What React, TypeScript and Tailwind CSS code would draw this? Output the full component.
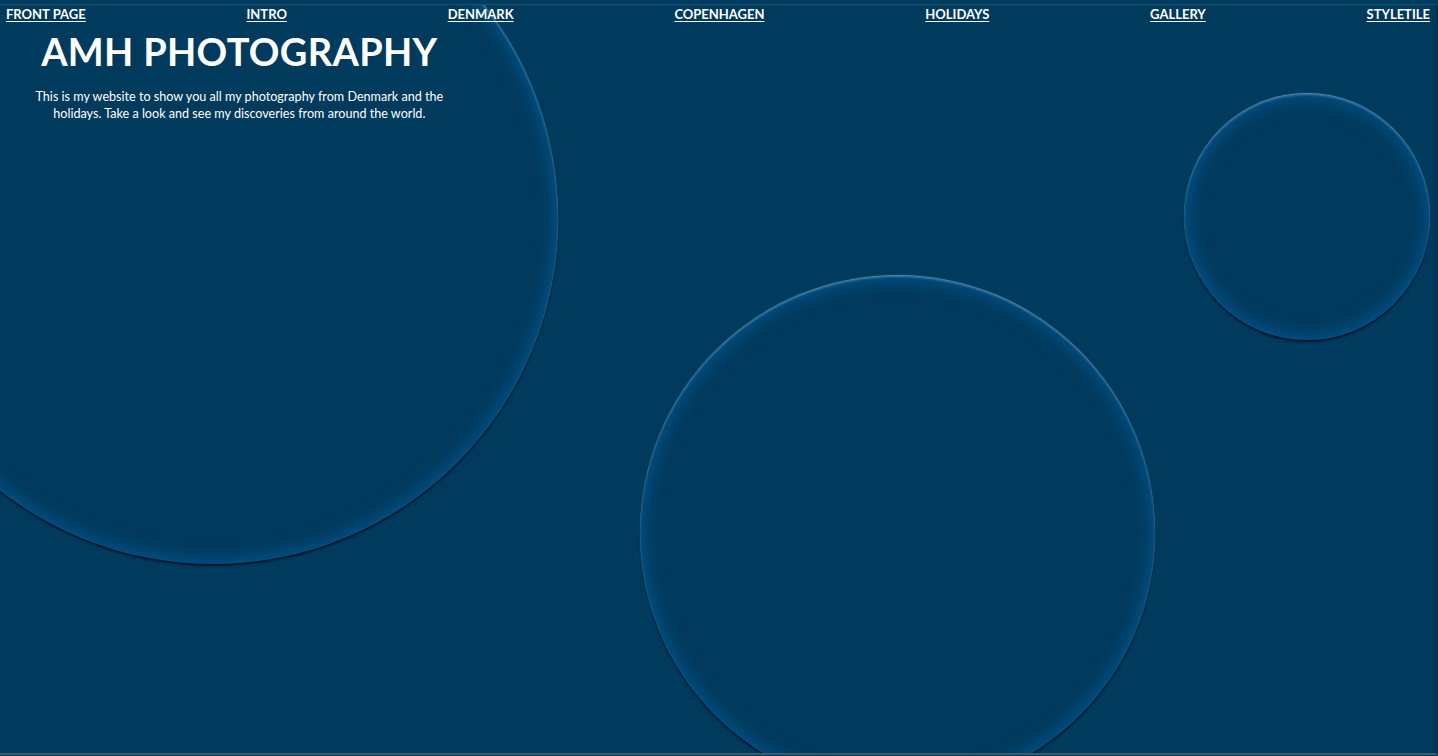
const links = ["FRONT PAGE", "INTRO", "DENMARK", "COPENHAGEN", "HOLIDAYS", "GALLERY", "STYLETILE"]

function Bubble({ className }: { className: string }) {
  return (
    <div
      className={`absolute rounded-full shadow-[0_-1px_1px_rgba(150,200,230,0.6),0_2px_2px_rgba(0,18,36,0.9),inset_0_1px_2px_rgba(120,180,220,0.45),inset_0_0_22px_rgba(4,100,170,0.85)] ${className}`}
    />
  )
}

export default function App() {
  return (
    <div className="h-[756px] w-[1438px] overflow-hidden bg-[#003a5c] pt-1 font-['Lato','Noto_Sans',sans-serif] text-white">
      <div className="relative h-[751px] overflow-hidden border-t border-r-2 border-b-2 border-t-[#165474] border-r-[#0d2f45] border-b-[#3d5a6c]">
        <Bubble className="left-[-132px] top-[-131px] h-[690px] w-[690px]" />
        <Bubble className="left-[640px] top-[271px] h-[515px] w-[515px]" />
        <Bubble className="left-[1184px] top-[89px] h-[246px] w-[246px]" />

        <nav className="relative flex justify-between px-[6px] pt-[1px]">
          {links.map((l) => (
            <a key={l} href="#" className="text-[13px] font-bold leading-[16px] underline underline-offset-2">
              {l}
            </a>
          ))}
        </nav>

        <header className="relative flex w-1/3 flex-col items-center text-center">
          <h1 className="mt-[5px] text-[38px] font-bold leading-[48px] tracking-[0.3px]">AMH PHOTOGRAPHY</h1>
          <p className="mt-[13px] w-[440px] text-[12.6px] leading-[17px]">
            This is my website to show you all my photography from Denmark and the holidays. Take a look and see my
            discoveries from around the world.
          </p>
        </header>
      </div>
    </div>
  )
}
